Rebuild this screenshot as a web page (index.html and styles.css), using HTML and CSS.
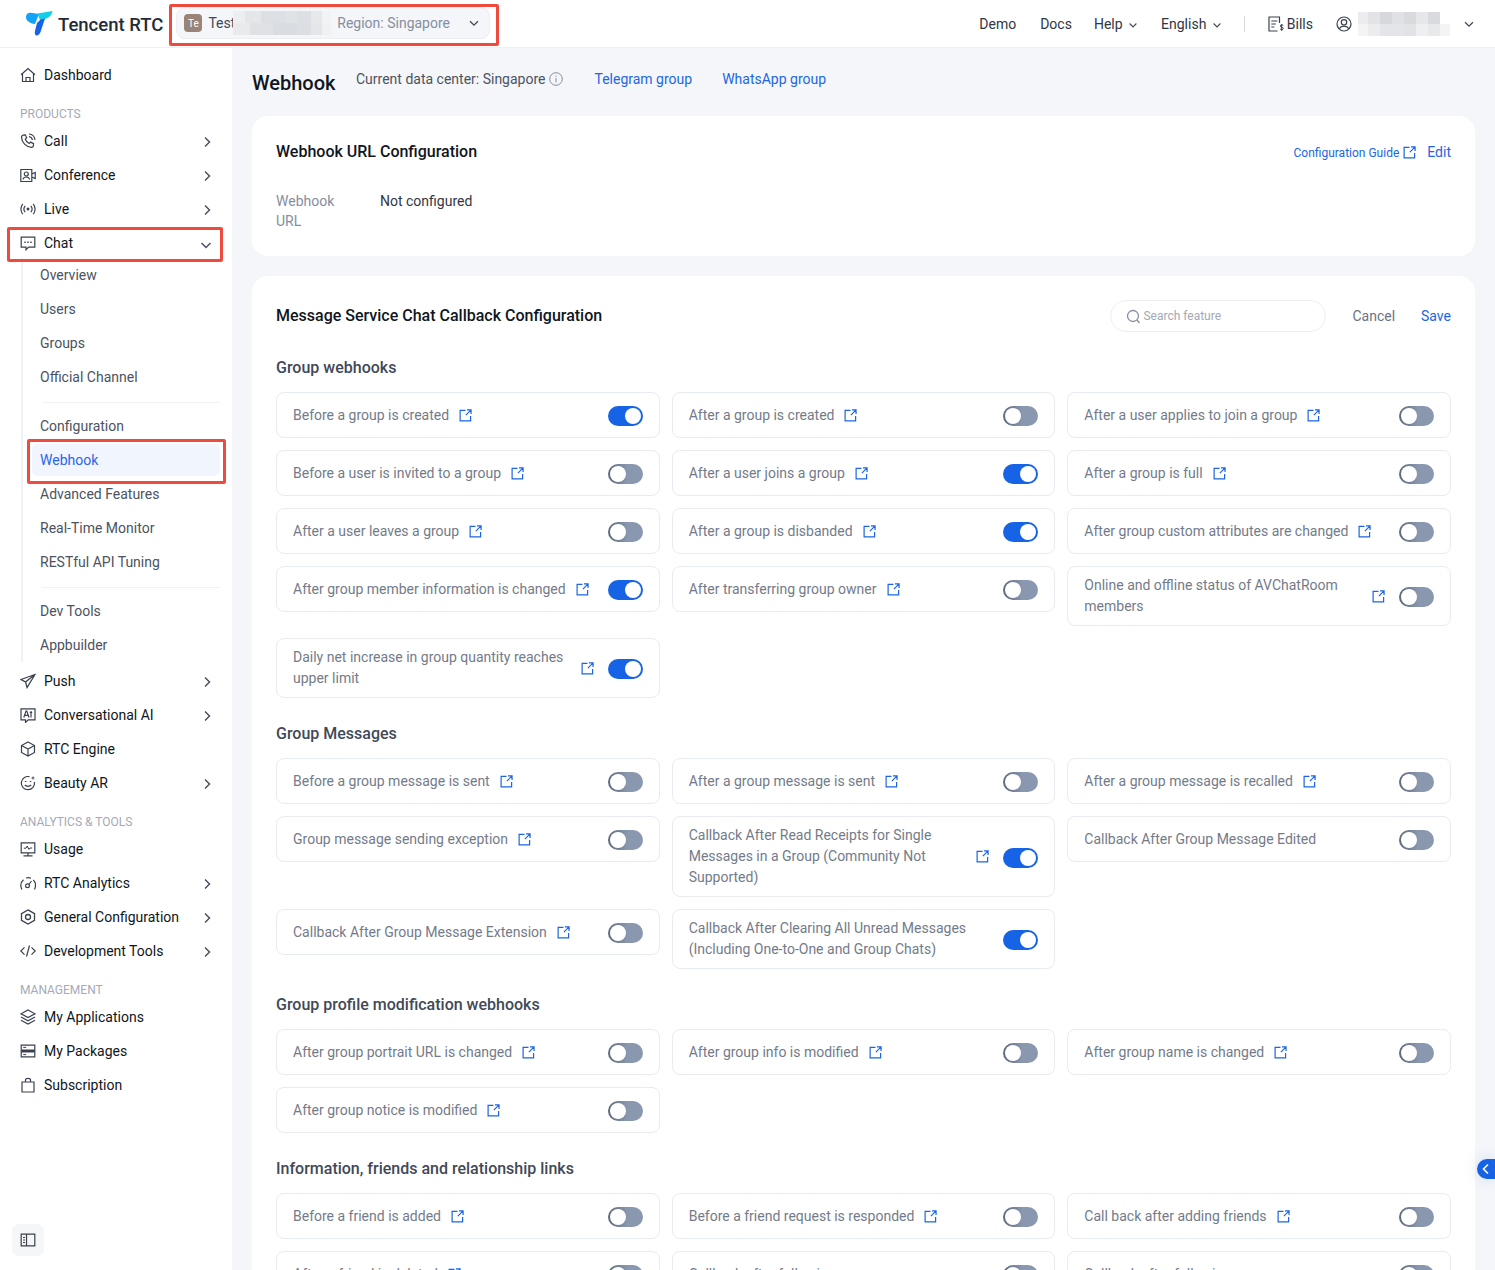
FILE: index.html
```html
<!DOCTYPE html>
<html lang="en">
<head>
  <meta charset="UTF-8">
  <meta name="viewport" content="width=device-width, initial-scale=1">
  <title>Webhook</title>
  <link rel="stylesheet" href="styles.css">
</head>
<body>

<svg class="defs" aria-hidden="true">
  <symbol id="i-ext" viewBox="0 0 14 14"><path d="M7 1.500H1.200v11.300h11.300V7.500M8.600 1H13v4.400M13 1 7.400 6.600" fill="none" stroke="currentColor" stroke-width="1.300"/></symbol>
  <symbol id="i-right" viewBox="0 0 16 16"><path d="M6 3.500 10.500 8 6 12.500" fill="none" stroke="currentColor" stroke-width="1.500"/></symbol>
  <symbol id="i-down" viewBox="0 0 16 16"><path d="M3.500 6 8 10.500 12.500 6" fill="none" stroke="currentColor" stroke-width="1.500"/></symbol>
  <symbol id="i-home" viewBox="0 0 16 16"><path d="M1 7.800 8 1.500l7 6.300M2.500 6.500V14.500h11V6.500M6 14.500v-4h4v4" fill="none" stroke="currentColor" stroke-width="1.200"/></symbol>
  <symbol id="i-call" viewBox="0 0 16 16"><path d="M2.800 2.200 5.300 1.800l1.400 3-1.400 1.400c.6 1.800 2.100 3.400 4 4.300l1.400-1.400 2.900 1.500-.3 2.500c-.2.800-1.100 1.300-1.900 1.200C6 13.800 1.900 9.500 1.500 4.400c-.1-1 .4-1.800 1.300-2.200ZM9 1c3.200.3 5.700 2.800 6 6M9 3.600c1.700.2 3.100 1.600 3.400 3.400" fill="none" stroke="currentColor" stroke-width="1.200"/></symbol>
  <symbol id="i-conf" viewBox="0 0 16 16"><path d="M11.800 2.500H.8v12h11V2.500ZM11.800 7l3.400-1.500v6l-3.400-1.500" fill="none" stroke="currentColor" stroke-width="1.200"/><circle cx="6.300" cy="7" r="2" fill="none" stroke="currentColor" stroke-width="1.200"/><path d="M3 12.500c.3-1.700 1.700-2.500 3.300-2.500s3 .8 3.300 2.500" fill="none" stroke="currentColor" stroke-width="1.200"/></symbol>
  <symbol id="i-live" viewBox="0 0 16 16"><circle cx="8" cy="8" r="1.500" fill="currentColor"/><path d="M5.200 4.800c-1.500 1.800-1.500 4.600 0 6.400M10.800 4.800c1.500 1.800 1.500 4.600 0 6.400M2.800 2.800C.3 5.800.3 10.200 2.800 13.200M13.200 2.800c2.500 3 2.500 7.400 0 10.400" fill="none" stroke="currentColor" stroke-width="1.200"/></symbol>
  <symbol id="i-chat" viewBox="0 0 16 16"><path d="M1.200 2.200h13.600v10H8.500L6 14.800v-2.600H1.200Z" fill="none" stroke="currentColor" stroke-width="1.200"/><path d="M4.300 7.200h1.400M7.300 7.200h1.400M10.300 7.200h1.400" stroke="currentColor" stroke-width="1.500"/></symbol>
  <symbol id="i-push" viewBox="0 0 16 16"><path d="M15 1.500 1 6.500l4.500 2.400 1.600 5.600L15 1.500ZM5.500 8.900 15 1.500" fill="none" stroke="currentColor" stroke-width="1.300"/></symbol>
  <symbol id="i-ai" viewBox="0 0 16 16"><path d="M1 1.800h14v11H8.200L5.500 15.500v-2.700H1Z" fill="none" stroke="currentColor" stroke-width="1.200"/><path d="M3.800 10.500 6 4h.8L9 10.500M4.600 8.400h3.600M11 4v6.500M9.800 5.500h2.400" fill="none" stroke="currentColor" stroke-width="1.200"/></symbol>
  <symbol id="i-box" viewBox="0 0 16 16"><path d="M8 1 14.500 4.500v7L8 15l-6.500-3.500v-7ZM1.500 4.500 8 8l6.500-3.500M8 8v7" fill="none" stroke="currentColor" stroke-width="1.200"/></symbol>
  <symbol id="i-face" viewBox="0 0 16 16"><path d="M9.500 1.700A6.600 6.600 0 1 0 14.400 7" fill="none" stroke="currentColor" stroke-width="1.200"/><path d="M4.800 10c1.600 1.700 4.800 1.700 6.400 0M4.800 6.500h1.600M9.800 6.500h1.500" fill="none" stroke="currentColor" stroke-width="1.200"/><path d="M13 .6l.5 1.900 1.900.5-1.900.5-.5 1.900-.5-1.900-1.900-.5 1.900-.5Z" fill="currentColor"/></symbol>
  <symbol id="i-usage" viewBox="0 0 16 16"><path d="M1.200 1.800h13.600v10H1.200ZM8 11.800V14.500M3.500 14.800h9" fill="none" stroke="currentColor" stroke-width="1.200"/><path d="M3.800 7.200h2.200l1.200-2.200 1.700 3.400L10 7h2.200" fill="none" stroke="currentColor" stroke-width="1"/></symbol>
  <symbol id="i-gauge" viewBox="0 0 16 16"><path d="M1.800 14.500C.2 11 1 7 3.500 4.800M6 3c1.700-.5 3.500-.4 5 .2M13.300 4.800c2.200 2.400 2.800 6.200 1.200 9.700" fill="none" stroke="currentColor" stroke-width="1.200"/><circle cx="7.500" cy="10.800" r="1.900" fill="none" stroke="currentColor" stroke-width="1.200"/><path d="M8.800 9.500 11.500 6" stroke="currentColor" stroke-width="1.200"/></symbol>
  <symbol id="i-gear" viewBox="0 0 16 16"><path d="M8 .9 14.500 4.600v6.800L8 15.100l-6.500-3.700V4.600Z" fill="none" stroke="currentColor" stroke-width="1.300"/><circle cx="8" cy="8" r="2.500" fill="none" stroke="currentColor" stroke-width="1.300"/></symbol>
  <symbol id="i-code" viewBox="0 0 16 16"><path d="M4.500 4.300.8 8l3.700 3.700M11.500 4.300 15.200 8l-3.700 3.700M9.500 2.500l-3 11" fill="none" stroke="currentColor" stroke-width="1.200"/></symbol>
  <symbol id="i-layers" viewBox="0 0 16 16"><path d="M8 1 15 4.800 8 8.500 1 4.800ZM1 8l7 3.700L15 8M1 11.200 8 15l7-3.800" fill="none" stroke="currentColor" stroke-width="1.200"/></symbol>
  <symbol id="i-pack" viewBox="0 0 16 16"><path d="M1.200 2.200h13.600v11.600H1.200Z" fill="none" stroke="currentColor" stroke-width="1.200"/><path d="M1.200 6.500h13.600v3H1.200Z" fill="currentColor"/><path d="M3.200 4.400h3M3.200 11.600h3" stroke="currentColor" stroke-width="1"/></symbol>
  <symbol id="i-bag" viewBox="0 0 16 16"><path d="M2 5h12v10H2ZM5.500 5V3c0-2.300 5-2.300 5 0v2" fill="none" stroke="currentColor" stroke-width="1.200"/></symbol>
  <symbol id="i-panel" viewBox="0 0 16 16"><path d="M1.200 2.200h13.600v11.600H1.200ZM6.500 2.200v11.600" fill="none" stroke="currentColor" stroke-width="1.200"/><path d="M3 5.500h2M3 8h2M3 10.500h2" stroke="currentColor" stroke-width="1"/></symbol>
  <symbol id="i-bills" viewBox="0 0 16 16"><path d="M9.500 15H1v-14h10.500v6" fill="none" stroke="currentColor" stroke-width="1.200"/><path d="M3.300 5h6M3.300 8h4.500M3.300 11h3" stroke="currentColor" stroke-width="1"/><path d="M15.300 9.500c-.6-.8-3-.9-3.100.5-.1 1.500 3.100.9 3.100 2.500 0 1.300-2.500 1.300-3.300.4M13.700 8v7" fill="none" stroke="currentColor" stroke-width="1"/></symbol>
  <symbol id="i-user" viewBox="0 0 16 16"><circle cx="8" cy="8" r="7" fill="none" stroke="currentColor" stroke-width="1.200"/><circle cx="8" cy="6.300" r="2.700" fill="none" stroke="currentColor" stroke-width="1.200"/><path d="M3.300 12.800c1-1.900 2.600-2.700 4.700-2.700s3.700.8 4.700 2.700" fill="none" stroke="currentColor" stroke-width="1.200"/></symbol>
</svg>

<header class="topbar">
  <div class="logo">
    <svg width="27" height="25" viewBox="0 0 27 25"><path d="M0 6c0-3 2-4.500 5-4.200L13 3 9 13C4 12.500 0 10 0 6Z" fill="#12a2f7"/><path d="M11.500 2.500 26.500 0c-.3 3.500-3.500 7-7.500 8l-5 1.300Z" fill="#16cde6"/><path d="M14.500 8.500 19 7.500 14.500 21c-.7 2.500-3.500 4.500-5 3-1-1-.7-3-.4-4.500L11 12Z" fill="#1664e5"/></svg>
    <span>Tencent RTC</span>
  </div>
  <div class="app-switch">
    <span class="mark mark-app"></span>
    <span class="avatar">Te</span>
    <span class="app-name">Test</span>
    <span class="blur blur-app"></span>
    <span class="region">Region: Singapore</span>
    <svg class="chev"><use href="#i-down"/></svg>
  </div>
  <nav class="top-links">
    <a class="top-link">Demo</a>
    <a class="top-link">Docs</a>
    <a class="top-link help">Help <svg class="chev-sm"><use href="#i-down"/></svg></a>
    <a class="top-link lang">English <svg class="chev-sm"><use href="#i-down"/></svg></a>
    <span class="top-sep"></span>
    <a class="top-link bills"><svg class="icon"><use href="#i-bills"/></svg>Bills</a>
    <a class="top-link account"><svg class="icon"><use href="#i-user"/></svg><span class="blur blur-user"></span><svg class="chev"><use href="#i-down"/></svg></a>
  </nav>
</header>

<div class="layout">
  <aside class="sidebar">
    <a class="nav-item"><svg class="icon"><use href="#i-home"/></svg>Dashboard</a>
    <div class="nav-label">PRODUCTS</div>
    <a class="nav-item"><svg class="icon"><use href="#i-call"/></svg>Call<svg class="arrow"><use href="#i-right"/></svg></a>
    <a class="nav-item"><svg class="icon"><use href="#i-conf"/></svg>Conference<svg class="arrow"><use href="#i-right"/></svg></a>
    <a class="nav-item"><svg class="icon"><use href="#i-live"/></svg>Live<svg class="arrow"><use href="#i-right"/></svg></a>
    <a class="nav-item open"><span class="mark mark-chat"></span><svg class="icon"><use href="#i-chat"/></svg>Chat<svg class="arrow"><use href="#i-down"/></svg></a>
    <div class="sub-nav">
      <a class="sub-item">Overview</a>
      <a class="sub-item">Users</a>
      <a class="sub-item">Groups</a>
      <a class="sub-item">Official Channel</a>
      <div class="sub-sep"></div>
      <a class="sub-item">Configuration</a>
      <a class="sub-item active"><span class="mark mark-hook"></span>Webhook</a>
      <a class="sub-item">Advanced Features</a>
      <a class="sub-item">Real-Time Monitor</a>
      <a class="sub-item">RESTful API Tuning</a>
      <div class="sub-sep"></div>
      <a class="sub-item">Dev Tools</a>
      <a class="sub-item">Appbuilder</a>
    </div>
    <a class="nav-item"><svg class="icon"><use href="#i-push"/></svg>Push<svg class="arrow"><use href="#i-right"/></svg></a>
    <a class="nav-item"><svg class="icon"><use href="#i-ai"/></svg>Conversational AI<svg class="arrow"><use href="#i-right"/></svg></a>
    <a class="nav-item"><svg class="icon"><use href="#i-box"/></svg>RTC Engine</a>
    <a class="nav-item"><svg class="icon"><use href="#i-face"/></svg>Beauty AR<svg class="arrow"><use href="#i-right"/></svg></a>
    <div class="nav-label">ANALYTICS &amp; TOOLS</div>
    <a class="nav-item"><svg class="icon"><use href="#i-usage"/></svg>Usage</a>
    <a class="nav-item"><svg class="icon"><use href="#i-gauge"/></svg>RTC Analytics<svg class="arrow"><use href="#i-right"/></svg></a>
    <a class="nav-item"><svg class="icon"><use href="#i-gear"/></svg>General Configuration<svg class="arrow"><use href="#i-right"/></svg></a>
    <a class="nav-item"><svg class="icon"><use href="#i-code"/></svg>Development Tools<svg class="arrow"><use href="#i-right"/></svg></a>
    <div class="nav-label">MANAGEMENT</div>
    <a class="nav-item"><svg class="icon"><use href="#i-layers"/></svg>My Applications</a>
    <a class="nav-item"><svg class="icon"><use href="#i-pack"/></svg>My Packages</a>
    <a class="nav-item"><svg class="icon"><use href="#i-bag"/></svg>Subscription</a>
    <button class="collapse-btn"><svg class="icon"><use href="#i-panel"/></svg></button>
  </aside>

  <main class="main">
    <div class="page-head">
      <h1>Webhook</h1>
      <span class="data-center">Current data center: Singapore</span>
      <svg class="info" viewBox="0 0 14 14"><circle cx="7" cy="7" r="6.300" fill="none" stroke="currentColor"/><path d="M7 6v4.500M7 3.500v1.300" stroke="currentColor"/></svg>
      <a class="head-link first">Telegram group</a>
      <a class="head-link">WhatsApp group</a>
    </div>

    <section class="card url-card">
      <div class="card-head">
        <h2>Webhook URL Configuration</h2>
        <a class="guide">Configuration Guide<svg class="ext"><use href="#i-ext"/></svg></a>
        <a class="edit">Edit</a>
      </div>
      <div class="url-row">
        <span class="url-label">Webhook URL</span>
        <span class="url-value">Not configured</span>
      </div>
    </section>

    <section class="card config-card">
      <div class="card-head">
        <h2>Message Service Chat Callback Configuration</h2>
        <div class="search">
          <svg width="15" height="15" viewBox="0 0 15 15"><circle cx="7" cy="7" r="5.500" fill="none" stroke="currentColor" stroke-width="1.300"/><path d="m11 11 2.500 3" stroke="currentColor" stroke-width="1.300"/></svg>
          <span>Search feature</span>
        </div>
        <a class="cancel">Cancel</a>
        <a class="save">Save</a>
      </div>

      <h3>Group webhooks</h3>
      <div class="hook-grid">
        <div class="hook"><span class="hook-name">Before a group is created</span><svg class="ext"><use href="#i-ext"/></svg><span class="toggle on"></span></div>
        <div class="hook"><span class="hook-name">After a group is created</span><svg class="ext"><use href="#i-ext"/></svg><span class="toggle"></span></div>
        <div class="hook"><span class="hook-name">After a user applies to join a group</span><svg class="ext"><use href="#i-ext"/></svg><span class="toggle"></span></div>
        <div class="hook"><span class="hook-name">Before a user is invited to a group</span><svg class="ext"><use href="#i-ext"/></svg><span class="toggle"></span></div>
        <div class="hook"><span class="hook-name">After a user joins a group</span><svg class="ext"><use href="#i-ext"/></svg><span class="toggle on"></span></div>
        <div class="hook"><span class="hook-name">After a group is full</span><svg class="ext"><use href="#i-ext"/></svg><span class="toggle"></span></div>
        <div class="hook"><span class="hook-name">After a user leaves a group</span><svg class="ext"><use href="#i-ext"/></svg><span class="toggle"></span></div>
        <div class="hook"><span class="hook-name">After a group is disbanded</span><svg class="ext"><use href="#i-ext"/></svg><span class="toggle on"></span></div>
        <div class="hook"><span class="hook-name">After group custom attributes are changed</span><svg class="ext"><use href="#i-ext"/></svg><span class="toggle"></span></div>
        <div class="hook"><span class="hook-name">After group member information is changed</span><svg class="ext"><use href="#i-ext"/></svg><span class="toggle on"></span></div>
        <div class="hook"><span class="hook-name">After transferring group owner</span><svg class="ext"><use href="#i-ext"/></svg><span class="toggle"></span></div>
        <div class="hook"><span class="hook-name">Online and offline status of AVChatRoom members</span><svg class="ext"><use href="#i-ext"/></svg><span class="toggle"></span></div>
        <div class="hook"><span class="hook-name">Daily net increase in group quantity reaches upper limit</span><svg class="ext"><use href="#i-ext"/></svg><span class="toggle on"></span></div>
      </div>

      <h3>Group Messages</h3>
      <div class="hook-grid">
        <div class="hook"><span class="hook-name">Before a group message is sent</span><svg class="ext"><use href="#i-ext"/></svg><span class="toggle"></span></div>
        <div class="hook"><span class="hook-name">After a group message is sent</span><svg class="ext"><use href="#i-ext"/></svg><span class="toggle"></span></div>
        <div class="hook"><span class="hook-name">After a group message is recalled</span><svg class="ext"><use href="#i-ext"/></svg><span class="toggle"></span></div>
        <div class="hook"><span class="hook-name">Group message sending exception</span><svg class="ext"><use href="#i-ext"/></svg><span class="toggle"></span></div>
        <div class="hook"><span class="hook-name">Callback After Read Receipts for Single Messages in a Group (Community Not Supported)</span><svg class="ext"><use href="#i-ext"/></svg><span class="toggle on"></span></div>
        <div class="hook"><span class="hook-name">Callback After Group Message Edited</span><span class="toggle"></span></div>
        <div class="hook"><span class="hook-name">Callback After Group Message Extension</span><svg class="ext"><use href="#i-ext"/></svg><span class="toggle"></span></div>
        <div class="hook"><span class="hook-name">Callback After Clearing All Unread Messages (Including One-to-One and Group Chats)</span><span class="toggle on"></span></div>
      </div>

      <h3>Group profile modification webhooks</h3>
      <div class="hook-grid">
        <div class="hook"><span class="hook-name">After group portrait URL is changed</span><svg class="ext"><use href="#i-ext"/></svg><span class="toggle"></span></div>
        <div class="hook"><span class="hook-name">After group info is modified</span><svg class="ext"><use href="#i-ext"/></svg><span class="toggle"></span></div>
        <div class="hook"><span class="hook-name">After group name is changed</span><svg class="ext"><use href="#i-ext"/></svg><span class="toggle"></span></div>
        <div class="hook"><span class="hook-name">After group notice is modified</span><svg class="ext"><use href="#i-ext"/></svg><span class="toggle"></span></div>
      </div>

      <h3>Information, friends and relationship links</h3>
      <div class="hook-grid">
        <div class="hook"><span class="hook-name">Before a friend is added</span><svg class="ext"><use href="#i-ext"/></svg><span class="toggle"></span></div>
        <div class="hook"><span class="hook-name">Before a friend request is responded</span><svg class="ext"><use href="#i-ext"/></svg><span class="toggle"></span></div>
        <div class="hook"><span class="hook-name">Call back after adding friends</span><svg class="ext"><use href="#i-ext"/></svg><span class="toggle"></span></div>
        <div class="hook"><span class="hook-name">After a friend is deleted</span><svg class="ext"><use href="#i-ext"/></svg><span class="toggle"></span></div>
        <div class="hook"><span class="hook-name">Callback after following</span><span class="toggle"></span></div>
        <div class="hook"><span class="hook-name">Callback after following</span><span class="toggle"></span></div>
      </div>
    </section>
  </main>
</div>

<button class="side-tab"><svg width="12" height="12" viewBox="0 0 12 12"><path d="M8 1.500 3.500 6 8 10.500" fill="none" stroke="#fff" stroke-width="1.600"/></svg></button>

</body>
</html>
```

FILE: styles.css
```css
* {
  box-sizing: border-box;
}
html, body {
  height: 100%;
}
body {
  margin: 0;
  display: flex;
  flex-direction: column;
  overflow: hidden;
  font-family: Roboto, "Liberation Sans", sans-serif;
  font-size: 14px;
  color: #0f1621;
  background: #f4f6fa;
}
.defs {
  display: none;
}
h1, h2, h3 {
  margin: 0;
  font-weight: 500;
}
.icon {
  width: 16px;
  height: 16px;
  flex: none;
  color: #3a414d;
}
.mark {
  position: absolute;
  border: 3px solid #ee4b3e;
  border-radius: 2px;
  pointer-events: none;
}

/* top bar */
.topbar {
  height: 48px;
  flex: none;
  display: flex;
  align-items: center;
  padding: 0 19px 0 26px;
  background: #fff;
  border-bottom: 1px solid #eef0f6;
}
.logo {
  display: flex;
  align-items: center;
  gap: 5px;
  color: #252b36;
  font-size: 18.5px;
  font-weight: 500;
}
.logo span {
  position: relative;
  top: 1px;
}
.app-switch {
  position: relative;
  width: 314px;
  height: 32px;
  margin-left: 13px;
  margin-top: -1px;
  display: flex;
  align-items: center;
  padding: 0 7px;
  background: #f4f6fa;
  border: 1px solid #eceef4;
  border-radius: 9px;
}
.mark-app {
  left: -8px;
  right: -10px;
  top: -4px;
  bottom: -8px;
}
.avatar {
  width: 18px;
  height: 18px;
  flex: none;
  display: flex;
  align-items: center;
  justify-content: center;
  background: #9a8478;
  border-radius: 4px;
  color: #fff;
  font-size: 10px;
}
.app-name {
  margin-left: 6px;
  flex: none;
  color: #414957;
}
.blur {
  display: block;
  height: 24px;
}
.blur-app {
  width: 98px;
  flex: none;
  margin: 0 6px 0 -2px;
  background:
    linear-gradient(90deg, #eceef0 0 12px, #e4e6ea 12px 28px, #dcdfe3 28px 52px, #e0e3e6 52px 64px, #dcdfe3 64px 78px, #e6e8ea 78px 89px, #f2f3f5 89px) 0 0 / 100% 12px no-repeat,
    linear-gradient(90deg, #e8eaec 0 17px, #dfe1e5 17px 40px, #d9dce0 40px 64px, #dbdee2 64px 78px, #e4e6e9 78px 89px, #f0f1f3 89px) 0 12px / 100% 12px no-repeat;
}
.blur-user {
  width: 92px;
  background:
    linear-gradient(90deg, #ececee 0 10px, #e2e3e6 10px 22px, #d6d8dd 22px 34px, #e0e1e4 34px 46px, #d8dade 46px 58px, #e6e7e9 58px 70px, #d8dade 70px 82px, #fff 82px) 0 0 / 100% 12px no-repeat,
    linear-gradient(90deg, #f4f4f5 0 10px, #ececee 10px 22px, #e4e5e8 22px 46px, #e2e3e6 46px 58px, #eeeff0 58px 70px, #e8e9eb 70px 82px, #f4f4f5 82px 92px) 0 12px / 100% 12px no-repeat;
}
.region {
  color: #868e9e;
}
.chev {
  width: 14px;
  height: 14px;
  color: #414957;
  margin-left: auto;
}
.app-switch .chev {
  margin-right: 1px;
}
.chev-sm {
  width: 12px;
  height: 12px;
  color: #414957;
  margin-left: 1px;
  vertical-align: -2px;
}
.top-links {
  margin-left: auto;
  display: flex;
  align-items: center;
  color: #2f3744;
}
.top-links .top-link {
  margin-left: 24px;
}
.top-links .top-link:first-child {
  margin-left: 0;
}
.top-links .help {
  margin-left: 22px;
}
.top-links .lang {
  margin-left: 22px;
}
.top-sep {
  width: 1px;
  height: 16px;
  margin-left: 21px;
  background: #d5d8de;
}
.top-links .bills {
  margin-left: 23px;
  display: flex;
  align-items: center;
  gap: 3px;
}
.top-links .account {
  margin-left: 23px;
  display: flex;
  align-items: center;
  gap: 6px;
}
.account .chev {
  margin-left: 6px;
}

/* sidebar */
.layout {
  flex: 1;
  display: flex;
  min-height: 0;
}
.sidebar {
  position: relative;
  width: 232px;
  flex: none;
  display: flex;
  flex-direction: column;
  padding-top: 10px;
  background: #fff;
}
.nav-item {
  position: relative;
  height: 34px;
  flex: none;
  display: flex;
  align-items: center;
  gap: 8px;
  padding: 0 17px 0 20px;
  color: #0f1621;
}
.arrow {
  position: relative;
  top: 1px;
  width: 16px;
  height: 16px;
  margin-left: auto;
  color: #4b5361;
}
.open .arrow {
  top: 2px;
  margin-right: 1px;
}
.mark-chat {
  left: 7px;
  right: 9px;
  top: 1px;
  bottom: -2px;
}
.nav-label {
  height: 32px;
  flex: none;
  padding: 14px 0 0 20px;
  font-size: 12px;
  line-height: 16px;
  color: #a4aab8;
}
.sub-nav {
  margin: -2px 0 2px 21px;
  border-left: 2px solid #f0f2f8;
  flex: none;
  display: flex;
  flex-direction: column;
}
.sub-item {
  position: relative;
  height: 32px;
  flex: none;
  margin: 1px 12px 1px 9px;
  display: flex;
  align-items: center;
  padding-left: 8px;
  border-radius: 5px;
  color: #4b5361;
}
.sub-item.active {
  background: #f0f5fe;
  color: #2b64ee;
}
.mark-hook {
  left: -5px;
  right: -6px;
  top: -5px;
  bottom: -8px;
}
.sub-sep {
  height: 1px;
  flex: none;
  margin: 8px 12px 6px 19px;
  background: #f0f2f6;
}
.collapse-btn {
  width: 32px;
  height: 32px;
  margin: auto 0 14px 12px;
  display: flex;
  align-items: center;
  justify-content: center;
  padding: 0;
  border: none;
  border-radius: 7px;
  background: #f5f6f8;
}

/* main */
.main {
  flex: 1;
  min-width: 0;
  overflow: hidden;
  padding: 0 20px;
}
.page-head {
  height: 68px;
  display: flex;
  align-items: center;
  color: #4b5361;
}
.page-head h1 {
  margin-top: 2px;
  width: 104px;
  font-size: 20px;
  line-height: 28px;
  color: #0f1621;
}
.data-center {
  margin-top: -6px;
}
.info {
  width: 14px;
  height: 14px;
  margin: -6px 0 0 4px;
  color: #868e9e;
}
.head-link {
  margin: -6px 0 0 30px;
  color: #1c66e5;
}
.head-link.first {
  margin-left: 31px;
}
.card {
  background: #fff;
  border-radius: 16px;
  padding: 0 24px;
  margin-bottom: 20px;
}
.card h2 {
  font-size: 16px;
  color: #0f1621;
}
.card-head {
  display: flex;
  align-items: center;
}
.url-card {
  height: 140px;
  padding-top: 24px;
}
.url-card .card-head {
  height: 22px;
}
.guide {
  margin: 4px 0 0 auto;
  display: flex;
  align-items: center;
  gap: 4px;
  font-size: 12px;
  color: #1c66e5;
}
.guide .ext {
  margin-top: -2px;
}
.edit {
  margin: 2px 0 0 11px;
  color: #1c66e5;
}
.url-row {
  margin-top: 29px;
  display: flex;
  line-height: 20px;
}
.url-label {
  width: 104px;
  padding-right: 24px;
  color: #868e9e;
}
.url-value {
  color: #2f3744;
}
.config-card {
  padding-top: 24px;
}
.config-card .card-head {
  height: 32px;
}
.config-card .card-head h2 {
  margin-top: -2px;
}
.search {
  margin-left: auto;
  width: 216px;
  height: 32px;
  display: flex;
  align-items: center;
  gap: 2px;
  padding-left: 15px;
  border: 1px solid #eceef4;
  border-radius: 16px;
  font-size: 12px;
  color: #a3a9b6;
}
.search svg {
  color: #868e9e;
}
.cancel {
  margin-left: 26px;
  color: #6b7382;
}
.save {
  margin-left: 26px;
  color: #1c66e5;
}
.config-card h3 {
  margin: 24px 0 12px;
  font-size: 16px;
  line-height: 24px;
  color: #414957;
}
.hook-grid {
  display: grid;
  grid-template-columns: repeat(3, 1fr);
  align-items: start;
  gap: 12px;
}
.hook {
  min-height: 46px;
  display: flex;
  align-items: center;
  padding: 8px 16px;
  border: 1px solid #e9ebf3;
  border-radius: 8px;
}
.hook-name {
  line-height: 21px;
  color: #737b8a;
}
.ext {
  width: 13px;
  height: 13px;
  flex: none;
  color: #1c66e5;
}
.hook .ext {
  margin: 0 14px 0 10px;
}
.toggle {
  position: relative;
  top: 1px;
  width: 35px;
  height: 20px;
  flex: none;
  margin-left: auto;
  border-radius: 10px;
  background: linear-gradient(90deg, #5d6879, #8a98af 55%);
}
.toggle::after {
  content: "";
  position: absolute;
  left: 2px;
  top: 2px;
  width: 16px;
  height: 16px;
  border-radius: 50%;
  background: #fff;
}
.toggle.on {
  background: #1664e5;
}
.toggle.on::after {
  left: 17px;
}
.side-tab {
  position: absolute;
  right: 0;
  top: 1159px;
  width: 18px;
  height: 20px;
  display: flex;
  align-items: center;
  justify-content: center;
  padding: 0;
  border: none;
  border-radius: 10px 0 0 10px;
  background: #1664e5;
  box-shadow: 0 0 16px rgba(60, 90, 160, .18);
}
```
